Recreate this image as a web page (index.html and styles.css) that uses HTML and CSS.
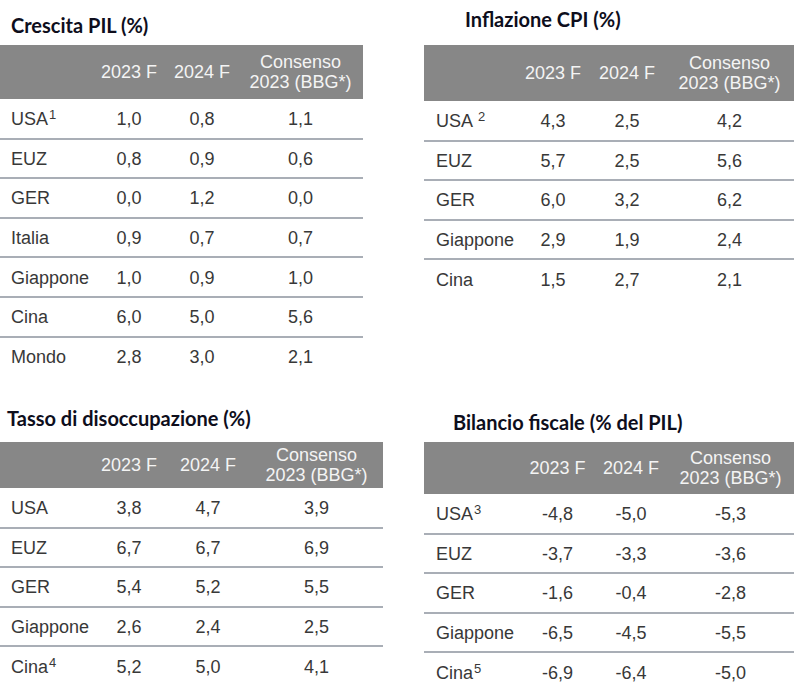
FILE: index.html
```html
<!DOCTYPE html>
<html lang="it">
<head>
<meta charset="utf-8">
<title>Previsioni macro</title>
<link rel="stylesheet" href="styles.css">
</head>
<body>
<div class="page">
  <section class="panel panel-tl">
    <h2 class="title">Crescita PIL (%)</h2>
    <table class="data">
      <colgroup><col class="c-l"><col class="c-a"><col class="c-b"><col class="c-c"></colgroup>
      <thead><tr><th></th><th>2023 F</th><th>2024 F</th><th>Consenso<br>2023 (BBG*)</th></tr></thead>
      <tbody>
        <tr><td>USA<sup>1</sup></td><td>1,0</td><td>0,8</td><td>1,1</td></tr>
        <tr><td>EUZ</td><td>0,8</td><td>0,9</td><td>0,6</td></tr>
        <tr><td>GER</td><td>0,0</td><td>1,2</td><td>0,0</td></tr>
        <tr><td>Italia</td><td>0,9</td><td>0,7</td><td>0,7</td></tr>
        <tr><td>Giappone</td><td>1,0</td><td>0,9</td><td>1,0</td></tr>
        <tr><td>Cina</td><td>6,0</td><td>5,0</td><td>5,6</td></tr>
        <tr><td>Mondo</td><td>2,8</td><td>3,0</td><td>2,1</td></tr>
      </tbody>
    </table>
  </section>
  <section class="panel panel-tr">
    <h2 class="title">Inflazione CPI (%)</h2>
    <table class="data">
      <colgroup><col class="c-l"><col class="c-a"><col class="c-b"><col class="c-c"></colgroup>
      <thead><tr><th></th><th>2023 F</th><th>2024 F</th><th>Consenso<br>2023 (BBG*)</th></tr></thead>
      <tbody>
        <tr><td>USA <sup>2</sup></td><td>4,3</td><td>2,5</td><td>4,2</td></tr>
        <tr><td>EUZ</td><td>5,7</td><td>2,5</td><td>5,6</td></tr>
        <tr><td>GER</td><td>6,0</td><td>3,2</td><td>6,2</td></tr>
        <tr><td>Giappone</td><td>2,9</td><td>1,9</td><td>2,4</td></tr>
        <tr><td>Cina</td><td>1,5</td><td>2,7</td><td>2,1</td></tr>
      </tbody>
    </table>
  </section>
  <section class="panel panel-bl">
    <h2 class="title">Tasso di disoccupazione (%)</h2>
    <table class="data">
      <colgroup><col class="c-l"><col class="c-a"><col class="c-b"><col class="c-c"></colgroup>
      <thead><tr><th></th><th>2023 F</th><th>2024 F</th><th>Consenso<br>2023 (BBG*)</th></tr></thead>
      <tbody>
        <tr><td>USA</td><td>3,8</td><td>4,7</td><td>3,9</td></tr>
        <tr><td>EUZ</td><td>6,7</td><td>6,7</td><td>6,9</td></tr>
        <tr><td>GER</td><td>5,4</td><td>5,2</td><td>5,5</td></tr>
        <tr><td>Giappone</td><td>2,6</td><td>2,4</td><td>2,5</td></tr>
        <tr><td>Cina<sup>4</sup></td><td>5,2</td><td>5,0</td><td>4,1</td></tr>
      </tbody>
    </table>
  </section>
  <section class="panel panel-br">
    <h2 class="title">Bilancio fiscale (% del PIL)</h2>
    <table class="data">
      <colgroup><col class="c-l"><col class="c-a"><col class="c-b"><col class="c-c"></colgroup>
      <thead><tr><th></th><th>2023 F</th><th>2024 F</th><th>Consenso<br>2023 (BBG*)</th></tr></thead>
      <tbody>
        <tr><td>USA<sup>3</sup></td><td>-4,8</td><td>-5,0</td><td>-5,3</td></tr>
        <tr><td>EUZ</td><td>-3,7</td><td>-3,3</td><td>-3,6</td></tr>
        <tr><td>GER</td><td>-1,6</td><td>-0,4</td><td>-2,8</td></tr>
        <tr><td>Giappone</td><td>-6,5</td><td>-4,5</td><td>-5,5</td></tr>
        <tr><td>Cina<sup>5</sup></td><td>-6,9</td><td>-6,4</td><td>-5,0</td></tr>
      </tbody>
    </table>
  </section>
</div>
</body>
</html>
```
FILE: styles.css
```css
html, body {
  margin: 0;
  padding: 0;
  background: #ffffff;
}

body {
  width: 800px;
  height: 687px;
  overflow: hidden;
}

.page {
  display: grid;
  grid-template-columns: 400px 400px;
  grid-template-rows: 385px 302px;
}

.panel {
  display: flex;
  flex-direction: column;
}

.title {
  margin: 0;
  box-sizing: border-box;
  flex: none;
  font-family: Lato, "Open Sans", sans-serif;
  font-weight: 700;
  font-size: 20px;
  line-height: 24px;
  color: #0e0e1c;
  white-space: nowrap;
}

.panel-tl .title { height: 45px; padding: 13px 0 0 11px; }
.panel-tr .title { height: 45px; padding: 7px 0 0 65px; }
.panel-bl .title { height: 57px; padding: 21px 0 0 7px; }
.panel-br .title { height: 57px; padding: 25px 0 0 53px; }

.panel-tr .data, .panel-br .data { margin-left: 24px; }

.data {
  border-collapse: collapse;
  table-layout: fixed;
  font-family: "Liberation Sans", Arial, sans-serif;
  font-size: 18px;
  color: #383838;
}

.data th {
  background: #878787;
  color: #f4f4f4;
  font-weight: 400;
  line-height: 20px;
  text-align: center;
  padding: 0;
}

.data td {
  height: 39.6px;
  padding: 2px 0 0 0;
  box-sizing: border-box;
  text-align: center;
  border-bottom: 2px solid #a9aeb6;
}

.data tbody tr:last-child td { border-bottom: none; }

.data td:first-child {
  text-align: left;
  padding-left: 11px;
}

.data sup {
  font-size: 13px;
  line-height: 0;
  vertical-align: 6px;
  margin-left: 1px;
}

/* Column widths per table */
.panel-tl .data { width: 363px; }
.panel-tl thead th { height: 54px; }
.panel-tl .c-l { width: 92px; }
.panel-tl .c-a { width: 74px; }
.panel-tl .c-b { width: 72px; }
.panel-tl .c-c { width: 125px; }

.panel-tr .data { width: 370px; }
.panel-tr thead th { height: 56px; }
.panel-tr .c-l { width: 93px; }
.panel-tr .c-a { width: 72px; }
.panel-tr .c-b { width: 76px; }
.panel-tr .c-c { width: 129px; }
.panel-tr td:first-child { padding-left: 12px; }

.panel-bl .data { width: 383px; }
.panel-bl thead th { height: 46px; }
.panel-bl .c-l { width: 92px; }
.panel-bl .c-a { width: 74px; }
.panel-bl .c-b { width: 84px; }
.panel-bl .c-c { width: 133px; }

.panel-br .data { width: 370px; }
.panel-br thead th { height: 52px; }
.panel-br .c-l { width: 96px; }
.panel-br .c-a { width: 75px; }
.panel-br .c-b { width: 72px; }
.panel-br .c-c { width: 127px; }
.panel-br td:first-child { padding-left: 12px; }
```
